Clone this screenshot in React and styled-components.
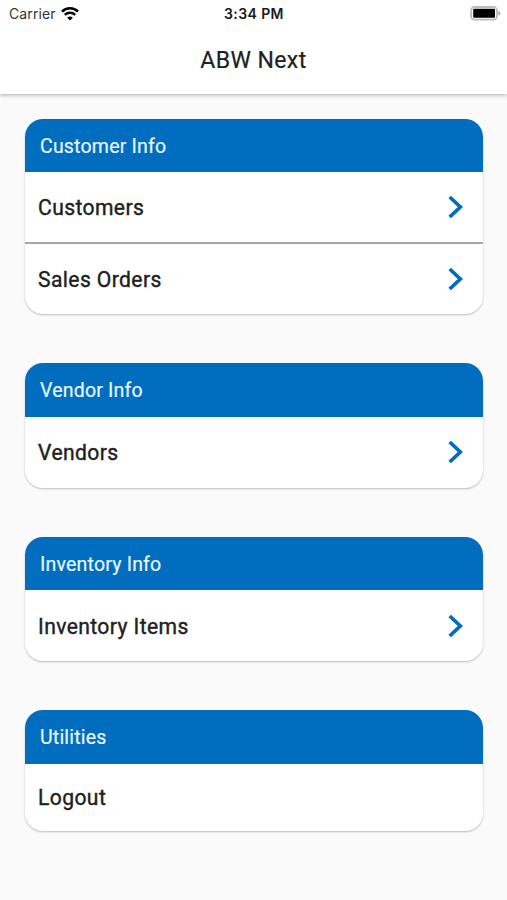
import React from "react";
import styled, { createGlobalStyle } from "styled-components";

const GlobalStyle = createGlobalStyle`
  * {
    box-sizing: border-box;
  }
  body {
    margin: 0;
    background: #fafafa;
    font-family: Roboto, "Liberation Sans", sans-serif;
    color: #212121;
  }
`;

const Screen = styled.div`
  min-height: 900px;
  background: #fafafa;
`;

const Header = styled.header`
  height: 94px;
  background: #fff;
  box-shadow: 0 1px 4px rgba(0, 0, 0, 0.32);
`;

const StatusBar = styled.div`
  display: grid;
  grid-template-columns: 1fr auto 1fr;
  align-items: center;
  height: 27px;
  padding: 0 6px 0 9px;
  font-family: Inter, "Liberation Sans", sans-serif;
`;

const Carrier = styled.div`
  display: flex;
  align-items: center;
  gap: 5px;
  font-size: 14px;
  letter-spacing: 0.1px;
  color: #333;
`;

const Time = styled.div`
  margin-right: 2px;
  font-size: 14px;
  font-weight: 600;
  letter-spacing: 0.4px;
  color: #1a1a1a;
`;

const Battery = styled.svg`
  justify-self: end;
`;

const Title = styled.h1`
  margin: 0;
  padding-top: 18px;
  font-size: 24px;
  line-height: 30px;
  font-weight: 400;
  letter-spacing: 0.4px;
  text-align: center;
  transform: scaleX(0.96);
  -webkit-text-stroke: 0.2px #212121;
`;

const Sections = styled.main`
  display: flex;
  flex-direction: column;
  gap: 49px;
  padding: 24.5px 24.5px 0 25px;
`;

const Card = styled.section`
  overflow: hidden;
  border-radius: 18px;
  background: #fff;
  box-shadow: 0 1px 2px rgba(0, 0, 0, 0.25);
`;

const CardTitle = styled.h2`
  display: flex;
  align-items: center;
  height: 53.5px;
  margin: 0;
  padding: 1px 0 0 15px;
  background: #006dbf;
  color: #e9f6ff;
  font-size: 21px;
  font-weight: 400;
  letter-spacing: 0.2px;
  -webkit-text-stroke: 0.2px #e9f6ff;
`;

const Row = styled.div`
  display: flex;
  align-items: center;
  justify-content: space-between;
  height: ${(props) => (props.$short ? "67px" : "71px")};
  padding: 0 19px 0 13px;
  font-size: 22px;
  letter-spacing: 0.4px;

  &:not(:last-child) {
    height: 70px;
  }
  & + & {
    height: 72px;
    border-top: 2px solid #a6a6a6;
  }
`;

/* slightly condensed text, as the system font is narrower than Roboto */
const Label = styled.span`
  transform: scaleX(${(props) => props.$scale});
  transform-origin: left center;
`;

const RowLabel = styled(Label)`
  padding-top: 1px;
  -webkit-text-stroke: 0.4px #212121;
`;

const sections = [
  { title: "Customer Info", items: ["Customers", "Sales Orders"] },
  { title: "Vendor Info", items: ["Vendors"] },
  { title: "Inventory Info", items: ["Inventory Items"] },
  { title: "Utilities", items: ["Logout"], action: true },
];

const WifiIcon = () => (
  <svg width="18" height="14" viewBox="0 0 18 14" fill="none" stroke="#000">
    <path d="M1 4.6a11.4 11.4 0 0 1 16 0" strokeWidth="2.5" />
    <path d="M3.8 7.9a7.4 7.4 0 0 1 10.4 0" strokeWidth="2.3" />
    <path d="M9 13.6 6.2 10.8a4 4 0 0 1 5.6 0z" fill="#000" stroke="none" />
  </svg>
);

const BatteryIcon = () => (
  <Battery width="31" height="15" viewBox="0 0 31 15">
    <rect x="1" y="1" width="26" height="12.6" rx="3.6" fill="#fff" stroke="#bcbcbc" strokeWidth="1.8" />
    <rect x="3.2" y="2.8" width="21.8" height="9" rx="1" fill="#000" />
    <path d="M28.4 5c2.4 .8 2.4 3.8 0 4.6z" fill="#a0a0a0" />
  </Battery>
);

const Chevron = () => (
  <svg width="16" height="24" viewBox="0 0 16 24" fill="none">
    <path d="M1.7 2 12.3 12 1.7 22" stroke="#006dbf" strokeWidth="3.7" />
  </svg>
);

const App = () => {
  return (
    <>
      <GlobalStyle />
      <Screen>
        <Header>
          <StatusBar>
            <Carrier>
              Carrier
              <WifiIcon />
            </Carrier>
            <Time>3:34 PM</Time>
            <BatteryIcon />
          </StatusBar>
          <Title>ABW Next</Title>
        </Header>
        <Sections>
          {sections.map(({ title, items, action }) => (
            <Card key={title}>
              <CardTitle>
                <Label $scale={0.93}>{title}</Label>
              </CardTitle>
              {items.map((item) => (
                <Row key={item} $short={action}>
                  <RowLabel $scale={0.96}>{item}</RowLabel>
                  {!action && <Chevron />}
                </Row>
              ))}
            </Card>
          ))}
        </Sections>
      </Screen>
    </>
  );
};

export default App;
